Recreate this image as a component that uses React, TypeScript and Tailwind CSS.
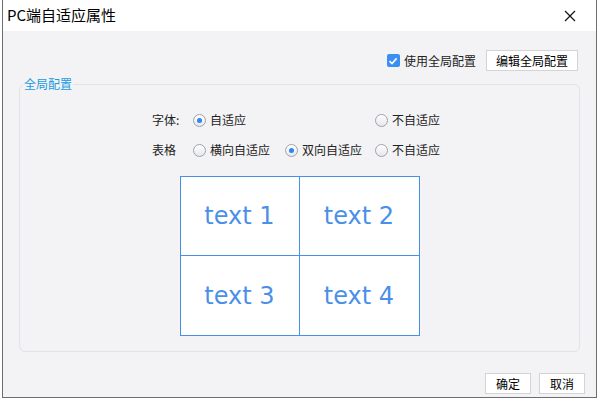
import React from "react";

const cjk = "font-['Microsoft_YaHei','Noto_Sans_CJK_SC',sans-serif]";

function Radio({ checked, label }: { checked?: boolean; label: string }) {
  return (
    <div className="flex items-center gap-[4px]">
      <span className="w-[13px] h-[13px] rounded-full border border-[#9ea3a9] bg-[linear-gradient(#ffffff,#e6e7ea)] flex items-center justify-center">
        {checked && <span className="w-[5px] h-[5px] rounded-full bg-[#2f86f0]" />}
      </span>
      <span className="text-[12px] text-[#222]">{label}</span>
    </div>
  );
}

function Btn({ children, w }: { children: React.ReactNode; w: string }) {
  return (
    <button className={`${w} h-[21px] bg-white border border-[#d4d4d4] text-[12px] text-black flex items-center justify-center`}>
      {children}
    </button>
  );
}

export default function App() {
  const cells = ["text 1", "text 2", "text 3", "text 4"];
  return (
    <div className={`w-[600px] h-[400px] bg-white overflow-hidden ${cjk}`}>
      <div className="ml-[2px] w-[595px] h-[398px] border-l border-r border-b border-[#6e6e6e] bg-[#f3f3f5] flex flex-col">
        {/* Title bar */}
        <div className="h-[31px] bg-white flex items-center justify-between pl-[4px] pr-[20px]">
          <span className="text-[15px] text-black">PC端自适应属性</span>
          <svg width="12" height="12" viewBox="0 0 12 12">
            <path d="M1 1L11 11M11 1L1 11" stroke="#111" strokeWidth="1.2" />
          </svg>
        </div>

        {/* Global config switch */}
        <div className="pt-[19px] pr-[18px] flex justify-end items-center gap-[10px]">
          <label className="flex items-center gap-[4px]">
            <span className="w-[13px] h-[13px] rounded-[2px] bg-[#3b8ef2] flex items-center justify-center">
              <svg width="10" height="10" viewBox="0 0 10 10">
                <path d="M1.5 5.2L4 7.6L8.6 2.4" stroke="white" strokeWidth="1.6" fill="none" />
              </svg>
            </span>
            <span className="text-[12px] text-[#222]">使用全局配置</span>
          </label>
          <Btn w="w-[92px]">编辑全局配置</Btn>
        </div>

        {/* Fieldset */}
        <fieldset className="mt-[5px] ml-[16px] mr-[16px] border border-[#e2e2e6] rounded-[6px] pb-[15px]">
          <legend className="ml-[3px] px-[1px] text-[12px] leading-[16px] text-[#1a9be0]">全局配置</legend>
          <div className="pt-[18px] pl-[132px] grid grid-cols-[41px_92px_90px_auto] gap-y-[10px] items-center">
            <span className="h-[20px] flex items-center text-[12px] text-[#222]">字体:</span>
            <Radio checked label="自适应" />
            <span />
            <Radio label="不自适应" />
            <span className="h-[20px] flex items-center text-[12px] text-[#222]">表格</span>
            <Radio label="横向自适应" />
            <Radio checked label="双向自适应" />
            <Radio label="不自适应" />
          </div>
          <div className="mt-[16px] mx-auto w-[240px] grid grid-cols-2 border border-[#4a8fe6] bg-white">
            {cells.map((c, i) => (
              <div
                key={c}
                className={`h-[79px] flex items-center justify-center font-['DejaVu_Sans',sans-serif] text-[24px] text-[#4a8fe8] ${
                  i % 2 === 0 ? "border-r border-[#4a8fe6]" : ""
                } ${i < 2 ? "border-b border-[#4a8fe6]" : ""}`}
              >
                {c}
              </div>
            ))}
          </div>
        </fieldset>

        {/* Footer buttons */}
        <div className="mt-[21px] pr-[11px] flex justify-end gap-[8px]">
          <Btn w="w-[46px]">确定</Btn>
          <Btn w="w-[46px]">取消</Btn>
        </div>
      </div>
    </div>
  );
}
